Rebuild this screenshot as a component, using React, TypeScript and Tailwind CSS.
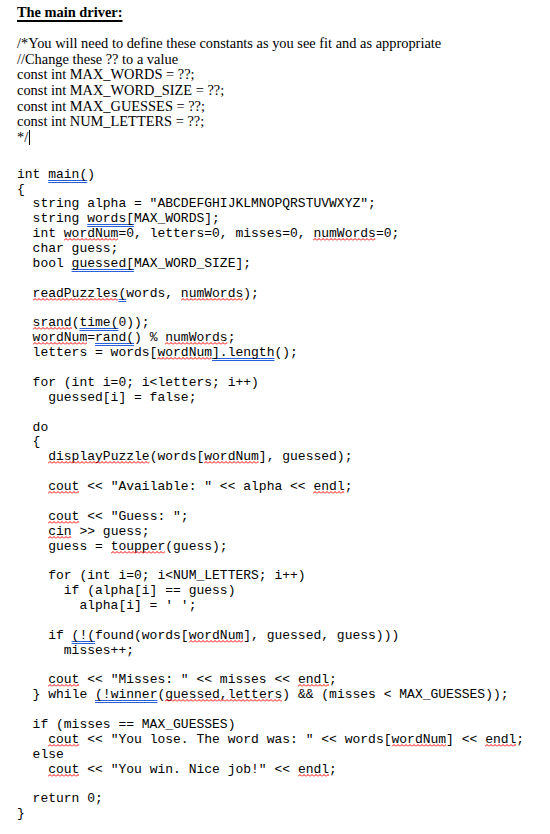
import React from "react";

const R = ({ children }: { children: React.ReactNode }) => (
  <span className="relative">
    {children}
    <svg className="pointer-events-none absolute left-0 bottom-[0px] h-[3px] w-full" preserveAspectRatio="none">
      <rect x="0" y="0" width="100%" height="3" fill="url(#squig)" />
    </svg>
  </span>
);

const B = ({ children }: { children: React.ReactNode }) => (
  <span className="underline decoration-double decoration-[#2b5fd9] decoration-1 underline-offset-[2px] [text-decoration-skip-ink:none]">
    {children}
  </span>
);

const L = ({ children }: { children?: React.ReactNode }) => (
  <div className="h-[14.88px] leading-[14.88px] whitespace-pre">{children ?? "\u00a0"}</div>
);

export default function App() {
  return (
    <div className="min-h-[834px] w-[550px] bg-white text-black">
      <svg className="absolute h-0 w-0" aria-hidden="true">
        <defs>
          <pattern id="squig" width="4" height="3" patternUnits="userSpaceOnUse">
            <path d="M0 2.5 L2 0.5 L4 2.5" stroke="#ff0000" strokeWidth="1" fill="none" />
          </pattern>
        </defs>
      </svg>
      <div className="pl-[17px] pt-[4px]">
        <div className="font-['Liberation_Serif',serif] text-[14.4px] leading-[16px] font-bold">
          <span className="underline decoration-[1.5px] underline-offset-[3px]">The main driver:</span>
        </div>
        <div className="mt-[16px] font-['Liberation_Serif',serif] text-[14.4px] leading-[15.67px]">
          <div>/*You will need to define these constants as you see fit and as appropriate</div>
          <div>//Change these ?? to a value</div>
          <div>const int MAX_WORDS = ??;</div>
          <div>const int MAX_WORD_SIZE = ??;</div>
          <div>const int MAX_GUESSES = ??;</div>
          <div>const int NUM_LETTERS = ??;</div>
          <div className="flex items-center">
            <span>*/</span>
            <span className="ml-px inline-block h-[15px] w-px bg-black" />
          </div>
        </div>
        <div className="mt-[22px] font-['Liberation_Mono',monospace] text-[13px]">
          <L>int <B>main(</B>)</L>
          <L>{"{"}</L>
          <L>  string alpha = "ABCDEFGHIJKLMNOPQRSTUVWXYZ";</L>
          <L>  string <B>words[</B>MAX_WORDS];</L>
          <L>  int <R>wordNum</R>=0, letters=0, misses=0, <R>numWords</R>=0;</L>
          <L>  char guess;</L>
          <L>  bool <B>guessed[</B>MAX_WORD_SIZE];</L>
          <L />
          <L>  <R>readPuzzles</R><B>(</B>words, <R>numWords</R>);</L>
          <L />
          <L>  <R>srand</R>(<B>time(</B>0));</L>
          <L>  <R>wordNum</R>=<B>rand(</B>) % <R>numWords</R>;</L>
          <L>  letters = words[<R>wordNum</R><B>].length</B>();</L>
          <L />
          <L>  for (int i=0; i&lt;letters; i++)</L>
          <L>    guessed[i] = false;</L>
          <L />
          <L>  do</L>
          <L>  {"{"}</L>
          <L>    <R>displayPuzzle</R>(words[<R>wordNum</R>], guessed);</L>
          <L />
          <L>    <R>cout</R> &lt;&lt; "Available: " &lt;&lt; alpha &lt;&lt; <R>endl</R>;</L>
          <L />
          <L>    <R>cout</R> &lt;&lt; "Guess: ";</L>
          <L>    <R>cin</R> &gt;&gt; guess;</L>
          <L>    guess = <R>toupper</R>(guess);</L>
          <L />
          <L>    for (int i=0; i&lt;NUM_LETTERS; i++)</L>
          <L>      if (alpha[i] == guess)</L>
          <L>        alpha[i] = ' ';</L>
          <L />
          <L>    if <B>(!(</B>found(words[<R>wordNum</R>], guessed, guess)))</L>
          <L>      misses++;</L>
          <L />
          <L>    <R>cout</R> &lt;&lt; "Misses: " &lt;&lt; misses &lt;&lt; <R>endl</R>;</L>
          <L>  {"}"} while <B>(!winner</B>(<R>guessed,letters</R>) &amp;&amp; (misses &lt; MAX_GUESSES));</L>
          <L />
          <L>  if (misses == MAX_GUESSES)</L>
          <L>    <R>cout</R> &lt;&lt; "You lose. The word was: " &lt;&lt; words[<R>wordNum</R>] &lt;&lt; <R>endl</R>;</L>
          <L>  else</L>
          <L>    <R>cout</R> &lt;&lt; "You win. Nice job!" &lt;&lt; <R>endl</R>;</L>
          <L />
          <L>  return 0;</L>
          <L>{"}"}</L>
        </div>
      </div>
    </div>
  );
}
